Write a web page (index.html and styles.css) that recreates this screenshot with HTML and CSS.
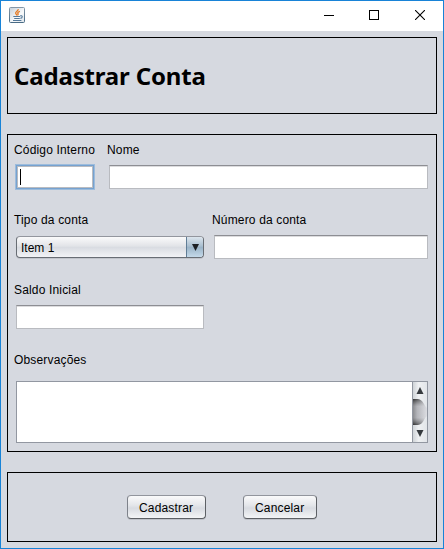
FILE: index.html
```html
<!DOCTYPE html>
<html lang="pt-BR">
<head>
<meta charset="utf-8">
<title>Cadastrar Conta</title>
<link rel="stylesheet" href="styles.css">
</head>
<body>
<div class="window">
  <header class="titlebar">
    <svg class="app-icon" width="16" height="16" viewBox="0 0 16 16">
      <defs><linearGradient id="tile" x1="0" y1="0" x2="0" y2="1"><stop offset="0" stop-color="#8497a8"/><stop offset="1" stop-color="#496b85"/></linearGradient>
      <linearGradient id="face" x1="0" y1="0" x2="1" y2="1"><stop offset="0" stop-color="#c6d0d9"/><stop offset=".6" stop-color="#f8fafb"/><stop offset="1" stop-color="#dce3e9"/></linearGradient></defs>
      <rect x=".5" y=".5" width="15" height="15" rx="1" fill="url(#face)" stroke="url(#tile)"/>
      <path d="M9.2 2.2C9.7 4 6 4.6 6.7 6.4L8 8.3M10.9 4.4C8.6 5.1 8.2 6 9.2 7L8.7 8.4" fill="none" stroke="#e37a25" stroke-width="1.3"/>
      <path d="M4.3 9.5H11.2M5.2 11.5H10.8M4 13.5H12.4M11.3 8.7C14 8.3 13.7 10.8 11.4 11.4" fill="none" stroke="#54799a" stroke-width="1.1"/>
    </svg>
    <div class="controls">
      <svg class="minimize" width="10" height="10" viewBox="0 0 10 10"><path d="M0 5.5H10" stroke="#000"/></svg>
      <svg class="maximize" width="10" height="10" viewBox="0 0 10 10"><rect x=".5" y=".5" width="9" height="9" fill="none" stroke="#000"/></svg>
      <svg width="10" height="10" viewBox="0 0 10 10"><path d="M0 0L10 10M10 0L0 10" stroke="#000" stroke-width="1.1"/></svg>
    </div>
  </header>
  <main class="content">
    <section class="panel heading"><h1>Cadastrar Conta</h1></section>
    <section class="panel form">
      <div class="row">
        <div class="field code"><label>Código Interno</label><div class="input focused"><span class="caret"></span></div></div>
        <div class="field grow"><label>Nome</label><div class="input"></div></div>
      </div>
      <div class="row">
        <div class="field half"><label>Tipo da conta</label>
          <div class="combo"><span class="value">Item 1</span><span class="drop"><svg width="7" height="7" viewBox="0 0 7 7"><path d="M0 0H7L3.5 7Z" fill="#1c1f23"/></svg></span></div>
        </div>
        <div class="field grow"><label>Número da conta</label><div class="input"></div></div>
      </div>
      <div class="row">
        <div class="field half"><label>Saldo Inicial</label><div class="input"></div></div>
      </div>
      <div class="notes">
        <label>Observações</label>
        <div class="textarea">
          <div class="page"></div>
          <div class="scrollbar">
            <svg width="14" height="60" viewBox="0 0 14 60">
              <defs>
                <linearGradient id="track"><stop offset="0" stop-color="#cfd3d7"/><stop offset=".4" stop-color="#eff1f3"/><stop offset="1" stop-color="#e2e5e9"/></linearGradient>
                <linearGradient id="thumb"><stop offset="0" stop-color="#8c8d91"/><stop offset=".3" stop-color="#b4b5ba"/><stop offset="1" stop-color="#dcdde2"/></linearGradient>
                <linearGradient id="edge" x1="0" y1="0" x2="0" y2="1"><stop offset="0" stop-color="#222" stop-opacity=".85"/><stop offset=".28" stop-color="#555" stop-opacity="0"/><stop offset=".72" stop-color="#555" stop-opacity="0"/><stop offset="1" stop-color="#222" stop-opacity=".85"/></linearGradient>
                <linearGradient id="fade"><stop offset="0" stop-color="#fff"/><stop offset="1" stop-color="#333"/></linearGradient>
                <mask id="side"><rect width="14" height="60" fill="url(#fade)"/></mask>
              </defs>
              <rect width="14" height="60" fill="url(#track)"/>
              <path d="M0 17H3C7.5 17 9.5 19 11 22Q12 24.5 14 26V34Q12 35.5 11 38C9.5 41 7.5 43 3 43H0Z" fill="url(#thumb)"/>
              <path d="M0 17H3C7.5 17 9.5 19 11 22Q12 24.5 14 26V34Q12 35.5 11 38C9.5 41 7.5 43 3 43H0Z" fill="url(#edge)" mask="url(#side)"/>
              <path d="M3.5 12H10.5L7 5Z" fill="#363a3e"/>
              <path d="M3.5 48H10.5L7 55Z" fill="#363a3e"/>
            </svg>
          </div>
        </div>
      </div>
    </section>
    <section class="panel actions">
      <button class="button save">Cadastrar</button>
      <button class="button cancel">Cancelar</button>
    </section>
  </main>
</div>
</body>
</html>
```
FILE: styles.css
```css
* { box-sizing: border-box; }
body { margin: 0; font: 12px/14px "Liberation Sans", Arial, sans-serif; color: #000; }
svg { display: block; }
.window { width: 444px; height: 549px; border: 1px solid #1883d7; background: #d6d9e0; overflow: hidden; }
.titlebar { height: 30px; background: #fff; display: flex; justify-content: space-between; padding: 6px 18px 0 8px; }
.controls { display: flex; padding-top: 3px; }
.minimize { margin-right: 35px; }
.maximize { margin-right: 36px; }
.content { display: flex; flex-direction: column; padding: 6px; }
.panel { border: 1px solid #000; width: 430px; }
.heading { height: 77px; padding: 23px 6px 0; margin-bottom: 20px; }
h1 { margin: 0; font: bold 24px/30px "Noto Sans", "Open Sans", sans-serif; letter-spacing: -.17px; white-space: nowrap; }
.form { height: 318px; padding: 8px 8px 0; margin-bottom: 20px; }
.row { display: flex; height: 70px; }
.field { display: flex; flex-direction: column; }
.grow { flex: 1; }
.half { width: 188px; margin-right: 10px; }
.code { width: 78px; margin-right: 15px; }
label { display: block; height: 14px; margin: 0 0 8px -2px; white-space: nowrap; letter-spacing: .16px; }
.input { height: 24px; background: #fff; border: 1px solid #b9bbc0; border-top-color: #8d8e93; box-shadow: inset 0 1px #dcdcde; }
.focused { border-color: #76a2d0; box-shadow: 0 0 0 1px #9dbcdc, inset 0 0 0 1px #b9bbc0, inset 0 1px #8d8e93; padding: 3px; }
.caret { display: block; width: 1px; height: 16px; background: #000; }
.combo { height: 22px; margin-top: 1px; border: 1px solid #686d74; border-top-color: #93969e; border-radius: 4px; display: flex; overflow: hidden; background: linear-gradient(#fafafb, #e2e4e8 45%, #d9dce2 52%, #f2f3f6); box-shadow: 0 1px #c1c4cb; }
.value { flex: 1; padding: 4px; letter-spacing: 0; }
.drop { width: 17px; border-left: 1px solid #607d96; padding: 7px 0 0 5px; background: linear-gradient(#dce5ed, #aabfd0 45%, #9bb4c8 52%, #c4d9e9); }
.notes label { margin-bottom: 14px; }
.textarea { width: 412px; height: 62px; border: 1px solid #9297a1; display: flex; background: #fff; }
.page { flex: 1; }
.scrollbar { width: 15px; border-left: 1px solid #9297a1; }
.actions { height: 70px; display: flex; gap: 37px; padding: 22px 0 0 119px; }
.button { height: 24px; border: 1px solid #5d6065; border-top-color: #92959d; border-left-color: #7e828a; border-radius: 4px; padding: 1px 0 0 11px; text-align: left; font: inherit; color: inherit; letter-spacing: .16px; background: linear-gradient(#fafafb, #e4e6ea 42%, #d8dbe1 55%, #f3f4f6); box-shadow: 0 1px #bec1c8; }
.save { width: 79px; }
.cancel { width: 74px; }
```
